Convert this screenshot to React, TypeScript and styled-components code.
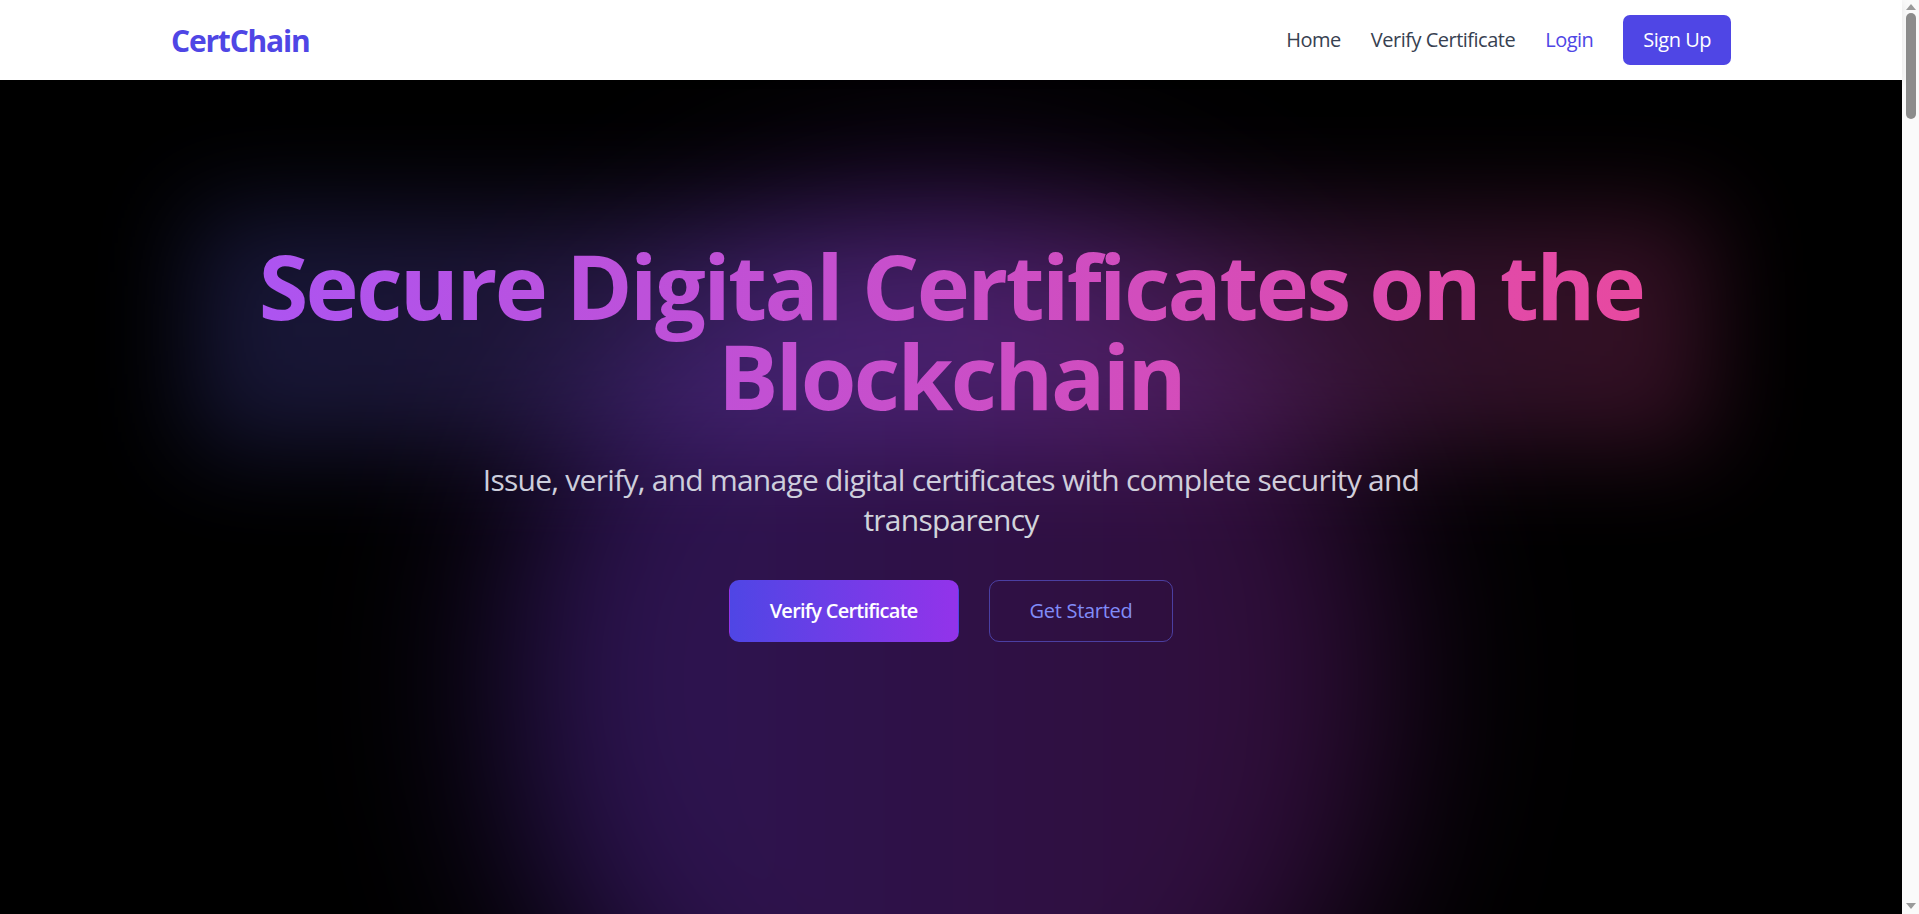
import React from "react";
import styled, { createGlobalStyle } from "styled-components";

// Global
const GlobalStyle = createGlobalStyle`
  * {
    box-sizing: border-box;
  }
  body {
    margin: 0;
    font-family: "Open Sans", "Noto Sans", sans-serif;
    background: #ffffff;
    color: #111827;
  }
  a {
    text-decoration: none;
  }
`;

// Layout: page column + the window scrollbar strip
const Page = styled.div`
  display: grid;
  grid-template-columns: minmax(0, 1fr) 17px;
`;
const Main = styled.main`
  min-width: 0;
`;
const ScrollBar = styled.div`
  align-self: start;
  position: sticky;
  top: 0;
  height: 100vh;
  background: #fafafa;
  display: flex;
  flex-direction: column;
  align-items: center;
  padding: 4px 0 5px;
`;
const Arrow = styled.span<{ $down?: boolean }>`
  width: 0;
  height: 0;
  border-left: 5px solid transparent;
  border-right: 5px solid transparent;
  ${(p) => (p.$down ? "border-top: 6px solid #9a9a9a;" : "border-bottom: 6px solid #9a9a9a;")}
  margin-top: ${(p) => (p.$down ? "auto" : "0")};
`;
const Thumb = styled.span`
  width: 10px;
  height: 106px;
  margin-top: 3px;
  border-radius: 5px;
  background: #8c8c8c;
`;

const Container = styled.div`
  max-width: 1600px;
  margin: 0 auto;
  padding: 0 20px;
`;
const NavBar = styled.nav`
  background: #ffffff;
  box-shadow: 0 2px 8px rgba(0, 0, 0, 0.08);
  position: relative;
  z-index: 10;
`;
const NavInner = styled(Container)`
  height: 80px;
  display: flex;
  align-items: center;
  justify-content: space-between;
`;
const Logo = styled.a`
  font-size: 30px;
  font-weight: 700;
  color: #4f46e5;
  letter-spacing: -1.2px;
`;
const NavLinks = styled.div`
  display: flex;
  align-items: center;
  gap: 30px;
`;
const NavLink = styled.a<{ $accent?: boolean }>`
  font-size: 20px;
  line-height: 30px;
  color: ${(p) => (p.$accent ? "#4f46e5" : "#374151")};
  letter-spacing: -0.5px;
`;
const SignUpButton = styled.button`
  border: none;
  background: #4f46e5;
  color: #ffffff;
  font-family: inherit;
  font-size: 20px;
  line-height: 30px;
  padding: 10px 20px;
  border-radius: 7px;
  letter-spacing: -0.5px;
  cursor: pointer;
`;

const Hero = styled.section`
  position: relative;
  overflow: hidden;
  background: #000000;
  min-height: 100vh;
  padding: 160px 20px 200px;
  text-align: center;

  &::before {
    content: "";
    position: absolute;
    left: 50%;
    top: 120px;
    width: 880px;
    height: 960px;
    transform: translateX(-50%);
    border-radius: 50%;
    background: linear-gradient(to right, rgba(124, 58, 237, 0.36), rgba(150, 40, 170, 0.32));
    filter: blur(90px);
  }
`;
const HeroInner = styled(Container)`
  position: relative;
  z-index: 1;
  padding: 0;
`;
const HeadingWrap = styled.div`
  position: relative;
  margin-bottom: 40px;

  &::before {
    content: "";
    position: absolute;
    inset: -30px 40px;
    background: linear-gradient(to right, #6366f1, #a855f7, #ec4899);
    opacity: 0.22;
    filter: blur(50px);
  }
`;
const Title = styled.h1`
  position: relative;
  margin: 0;
  font-size: 90px;
  line-height: 90px;
  font-weight: 700;
  letter-spacing: -2.6px;
  background: linear-gradient(to right, #a855f7, #ec4899);
  -webkit-background-clip: text;
  background-clip: text;
  color: transparent;
`;
const Subtitle = styled.p`
  max-width: 960px;
  margin: 0 auto 40px;
  font-size: 30px;
  line-height: 40px;
  color: #d1d5db;
  letter-spacing: -0.75px;
`;
const Actions = styled.div`
  display: flex;
  justify-content: center;
  gap: 30px;
`;
const ActionButton = styled.a<{ $variant: "primary" | "outline" }>`
  display: inline-block;
  padding: 15px 40px;
  border-radius: 10px;
  font-size: 20px;
  line-height: 30px;
  font-weight: ${(p) => (p.$variant === "primary" ? 600 : 500)};
  letter-spacing: ${(p) => (p.$variant === "primary" ? "-0.75px" : "-0.3px")};
  color: ${(p) => (p.$variant === "primary" ? "#ffffff" : "#818cf8")};
  border: 1px solid ${(p) => (p.$variant === "primary" ? "transparent" : "rgba(99, 102, 241, 0.55)")};
  background: ${(p) =>
    p.$variant === "primary" ? "linear-gradient(to right, #4f46e5, #9333ea)" : "transparent"};
`;

// Sections below the fold
const Section = styled.section<{ $minHeight: number }>`
  min-height: ${(p) => p.$minHeight}px;
  padding: 120px 20px;
  background: #ffffff;
`;
const SectionTitle = styled.h2`
  margin: 0 0 20px;
  text-align: center;
  font-size: 45px;
  font-weight: 700;
`;
const SectionLead = styled.p`
  max-width: 900px;
  margin: 0 auto 70px;
  text-align: center;
  font-size: 22px;
  line-height: 34px;
  color: #6b7280;
`;
const CardGrid = styled.div`
  display: grid;
  grid-template-columns: repeat(3, 1fr);
  gap: 40px;
`;
const Card = styled.div`
  padding: 40px;
  border-radius: 14px;
  background: #f9fafb;
  border: 1px solid #e5e7eb;
`;
const CardTitle = styled.h3`
  margin: 0 0 14px;
  font-size: 26px;
  color: #4f46e5;
`;
const CardText = styled.p`
  margin: 0;
  font-size: 19px;
  line-height: 30px;
  color: #4b5563;
`;
const Footer = styled.footer`
  padding: 60px 20px;
  background: #111827;
  color: #9ca3af;
  text-align: center;
  font-size: 18px;
`;

const features = [
  { title: "Tamper-proof", text: "Every certificate is anchored on-chain, so records cannot be altered after issuing." },
  { title: "Instant verification", text: "Anyone can check a certificate in seconds with its unique ID or QR code." },
  { title: "Full ownership", text: "Holders keep their credentials and share them wherever they need to." },
];

const steps = [
  { title: "1. Issue", text: "Institutions create and sign certificates from their dashboard." },
  { title: "2. Store", text: "A hash of each certificate is written to the blockchain." },
  { title: "3. Verify", text: "Employers and others confirm authenticity in one click." },
];

export default function App(): JSX.Element {
  return (
    <Page>
      <GlobalStyle />
      <Main>
        <NavBar>
          <NavInner>
            <Logo href="#">CertChain</Logo>
            <NavLinks>
              <NavLink href="#">Home</NavLink>
              <NavLink href="#">Verify Certificate</NavLink>
              <NavLink href="#" $accent>
                Login
              </NavLink>
              <SignUpButton>Sign Up</SignUpButton>
            </NavLinks>
          </NavInner>
        </NavBar>

        <Hero>
          <HeroInner>
            <HeadingWrap>
              <Title>Secure Digital Certificates on the Blockchain</Title>
            </HeadingWrap>
            <Subtitle>
              Issue, verify, and manage digital certificates with complete security and transparency
            </Subtitle>
            <Actions>
              <ActionButton href="#" $variant="primary">
                Verify Certificate
              </ActionButton>
              <ActionButton href="#" $variant="outline">
                Get Started
              </ActionButton>
            </Actions>
          </HeroInner>
        </Hero>

        <Section $minHeight={1400}>
          <Container>
            <SectionTitle>Why CertChain</SectionTitle>
            <SectionLead>Built for institutions, students and employers who need credentials they can trust.</SectionLead>
            <CardGrid>
              {features.map((f) => (
                <Card key={f.title}>
                  <CardTitle>{f.title}</CardTitle>
                  <CardText>{f.text}</CardText>
                </Card>
              ))}
            </CardGrid>
          </Container>
        </Section>

        <Section $minHeight={1500}>
          <Container>
            <SectionTitle>How it works</SectionTitle>
            <SectionLead>Three simple steps from issuing to verifying.</SectionLead>
            <CardGrid>
              {steps.map((s) => (
                <Card key={s.title}>
                  <CardTitle>{s.title}</CardTitle>
                  <CardText>{s.text}</CardText>
                </Card>
              ))}
            </CardGrid>
          </Container>
        </Section>

        <Section $minHeight={1500}>
          <Container>
            <SectionTitle>Trusted by institutions</SectionTitle>
            <SectionLead>Universities, training centers and companies issue their certificates with CertChain.</SectionLead>
          </Container>
        </Section>

        <Section $minHeight={1500}>
          <Container>
            <SectionTitle>Ready to get started?</SectionTitle>
            <SectionLead>Create an account and issue your first certificate today.</SectionLead>
          </Container>
        </Section>

        <Footer>© 2024 CertChain. All rights reserved.</Footer>
      </Main>
      <ScrollBar>
        <Arrow />
        <Thumb />
        <Arrow $down />
      </ScrollBar>
    </Page>
  );
}
